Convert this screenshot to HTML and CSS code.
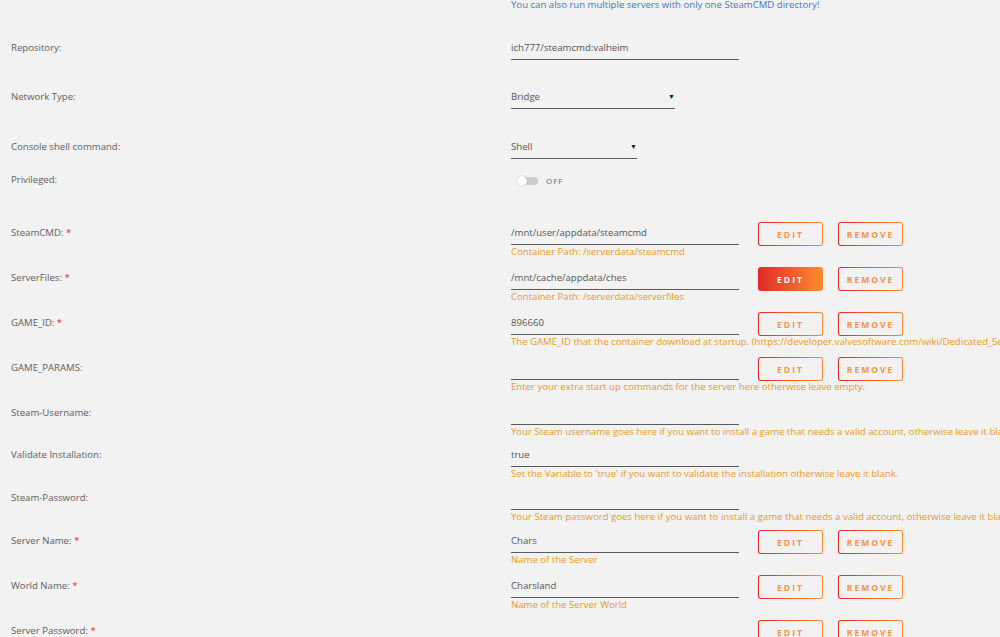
FILE: index.html
```html
<!DOCTYPE html>
<html lang="en">
<head>
    <meta charset="UTF-8">
    <title>Update Container</title>
    <link rel="stylesheet" href="styles.css">
</head>
<body>
    <div class="note">You can also run multiple servers with only one SteamCMD directory!</div>

    <div class="row top-first">
        <div class="label">Repository:</div>
        <div class="field"><div class="input">ich777/steamcmd:valheim</div></div>
    </div>
    <div class="row top">
        <div class="label">Network Type:</div>
        <div class="field"><div class="input select net">Bridge<span class="caret">&#9660;</span></div></div>
    </div>
    <div class="row top">
        <div class="label">Console shell command:</div>
        <div class="field"><div class="input select shell">Shell<span class="caret">&#9660;</span></div></div>
    </div>
    <div class="row priv">
        <div class="label">Privileged:</div>
        <div class="field switch-wrap">
            <span class="switch"><span class="knob"></span></span>
            <span class="switch-text">OFF</span>
        </div>
    </div>

    <div class="row cfg">
        <div class="label">SteamCMD: <span class="req">*</span></div>
        <div class="field">
            <div class="input">/mnt/user/appdata/steamcmd</div>
            <div class="desc">Container Path: /serverdata/steamcmd</div>
        </div>
        <div class="actions">
            <button class="btn">EDIT</button>
            <button class="btn">REMOVE</button>
        </div>
    </div>
    <div class="row cfg">
        <div class="label">ServerFiles: <span class="req">*</span></div>
        <div class="field">
            <div class="input">/mnt/cache/appdata/ches</div>
            <div class="desc">Container Path: /serverdata/serverfiles</div>
        </div>
        <div class="actions">
            <button class="btn active">EDIT</button>
            <button class="btn">REMOVE</button>
        </div>
    </div>
    <div class="row cfg">
        <div class="label">GAME_ID: <span class="req">*</span></div>
        <div class="field">
            <div class="input">896660</div>
            <div class="desc">The GAME_ID that the container download at startup. (https://developer.valvesoftware.com/wiki/Dedicated_Servers_List)</div>
        </div>
        <div class="actions">
            <button class="btn">EDIT</button>
            <button class="btn">REMOVE</button>
        </div>
    </div>
    <div class="row cfg">
        <div class="label">GAME_PARAMS:</div>
        <div class="field">
            <div class="input"></div>
            <div class="desc">Enter your extra start up commands for the server here otherwise leave empty.</div>
        </div>
        <div class="actions">
            <button class="btn">EDIT</button>
            <button class="btn">REMOVE</button>
        </div>
    </div>
    <div class="row cfg plain tight">
        <div class="label">Steam-Username:</div>
        <div class="field">
            <div class="input"></div>
            <div class="desc">Your Steam username goes here if you want to install a game that needs a valid account, otherwise leave it blank.</div>
        </div>
    </div>
    <div class="row cfg plain">
        <div class="label">Validate Installation:</div>
        <div class="field">
            <div class="input">true</div>
            <div class="desc">Set the Variable to 'true' if you want to validate the installation otherwise leave it blank.</div>
        </div>
    </div>
    <div class="row cfg plain">
        <div class="label">Steam-Password:</div>
        <div class="field">
            <div class="input"></div>
            <div class="desc">Your Steam password goes here if you want to install a game that needs a valid account, otherwise leave it blank.</div>
        </div>
    </div>
    <div class="row cfg">
        <div class="label">Server Name: <span class="req">*</span></div>
        <div class="field">
            <div class="input">Chars</div>
            <div class="desc">Name of the Server</div>
        </div>
        <div class="actions">
            <button class="btn">EDIT</button>
            <button class="btn">REMOVE</button>
        </div>
    </div>
    <div class="row cfg">
        <div class="label">World Name: <span class="req">*</span></div>
        <div class="field">
            <div class="input">Charsland</div>
            <div class="desc">Name of the Server World</div>
        </div>
        <div class="actions">
            <button class="btn">EDIT</button>
            <button class="btn">REMOVE</button>
        </div>
    </div>
    <div class="row cfg">
        <div class="label">Server Password: <span class="req">*</span></div>
        <div class="field">
            <div class="input"></div>
            <div class="desc">Password for the Server</div>
        </div>
        <div class="actions">
            <button class="btn">EDIT</button>
            <button class="btn">REMOVE</button>
        </div>
    </div>
</body>
</html>
```
FILE: styles.css
```css
html, body { overflow: hidden; }
body { margin: 0; padding: 0 0 0 11px; background: #f2f2f2; color: #606060; font-family: "Open Sans", "Liberation Sans", sans-serif; font-size: 9.6px; }

.note { margin: -1px 0 0 500px; line-height: 12px; color: #4a72c4; white-space: nowrap; }

.row { display: flex; align-items: flex-start; }
.label { width: 500px; flex: none; line-height: 20px; }
.req { color: #e22828; }
.field { flex: none; width: 228px; }
.input { height: 21px; line-height: 20px; border-bottom: 1px solid #5a5a5a; color: #555; white-space: nowrap; }
.desc { line-height: 13px; color: #ec9a1d; white-space: nowrap; }

.top-first { margin-top: 27px; }
.top { margin-top: 28px; }
.top-first + .top { margin-top: 27px; }
.select { position: relative; }
.net { width: 164px; }
.shell { width: 126px; }
.caret { position: absolute; right: 0; top: 0; font-size: 7px; color: #222; }

.priv { margin-top: 11px; }
.switch-wrap { display: flex; align-items: center; height: 21px; padding-left: 7px; }
.switch { position: relative; width: 20px; height: 8px; border-radius: 5px; background: #ccc; }
.knob { position: absolute; left: -1px; top: -1px; width: 10px; height: 10px; border-radius: 50%; background: #fff; box-shadow: 0 0 1px rgba(0, 0, 0, 0.4); }
.switch-text { margin-left: 8px; font-size: 8px; letter-spacing: 1px; color: #666; }

.cfg { margin-bottom: 10px; }
.priv + .cfg { margin-top: 32px; }
.plain { margin-bottom: 8px; }
.tight { margin-bottom: 7px; }

.actions { display: flex; gap: 15px; margin: -1px 0 0 19px; }
.btn { width: 65px; height: 24px; padding: 0; border: 1.5px solid transparent; border-radius: 3px; background: linear-gradient(#f2f2f2, #f2f2f2) padding-box, linear-gradient(90deg, #e22828, #ff8c2f) border-box; color: #f7924a; font-family: "Open Sans", "Liberation Sans", sans-serif; font-size: 8.5px; font-weight: 700; letter-spacing: 2px; cursor: pointer; }
.btn.active { background: linear-gradient(90deg, #e22828, #ff8c2f) border-box; color: #fff; }
```
